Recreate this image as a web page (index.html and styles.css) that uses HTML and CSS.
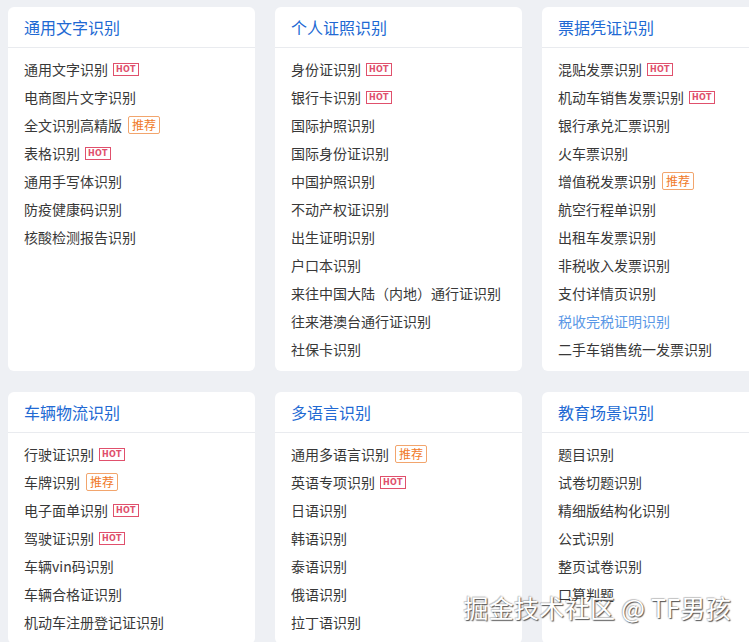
FILE: index.html
```html
<!DOCTYPE html>
<html lang="zh">
<head>
<meta charset="utf-8">
<link rel="stylesheet" href="styles.css">
</head>
<body>
<div class="grid">
  <section class="card">
    <h2 class="title">通用文字识别</h2>
    <ul class="list">
      <li>通用文字识别<span class="hot">HOT</span></li>
      <li>电商图片文字识别</li>
      <li>全文识别高精版<span class="rec">推荐</span></li>
      <li>表格识别<span class="hot">HOT</span></li>
      <li>通用手写体识别</li>
      <li>防疫健康码识别</li>
      <li>核酸检测报告识别</li>
    </ul>
  </section>
  <section class="card">
    <h2 class="title">个人证照识别</h2>
    <ul class="list">
      <li>身份证识别<span class="hot">HOT</span></li>
      <li>银行卡识别<span class="hot">HOT</span></li>
      <li>国际护照识别</li>
      <li>国际身份证识别</li>
      <li>中国护照识别</li>
      <li>不动产权证识别</li>
      <li>出生证明识别</li>
      <li>户口本识别</li>
      <li>来往中国大陆（内地）通行证识别</li>
      <li>往来港澳台通行证识别</li>
      <li>社保卡识别</li>
    </ul>
  </section>
  <section class="card">
    <h2 class="title">票据凭证识别</h2>
    <ul class="list">
      <li>混贴发票识别<span class="hot">HOT</span></li>
      <li>机动车销售发票识别<span class="hot">HOT</span></li>
      <li>银行承兑汇票识别</li>
      <li>火车票识别</li>
      <li>增值税发票识别<span class="rec">推荐</span></li>
      <li>航空行程单识别</li>
      <li>出租车发票识别</li>
      <li>非税收入发票识别</li>
      <li>支付详情页识别</li>
      <li class="active">税收完税证明识别</li>
      <li>二手车销售统一发票识别</li>
    </ul>
  </section>
  <section class="card">
    <h2 class="title">车辆物流识别</h2>
    <ul class="list">
      <li>行驶证识别<span class="hot">HOT</span></li>
      <li>车牌识别<span class="rec">推荐</span></li>
      <li>电子面单识别<span class="hot">HOT</span></li>
      <li>驾驶证识别<span class="hot">HOT</span></li>
      <li>车辆vin码识别</li>
      <li>车辆合格证识别</li>
      <li>机动车注册登记证识别</li>
    </ul>
  </section>
  <section class="card">
    <h2 class="title">多语言识别</h2>
    <ul class="list">
      <li>通用多语言识别<span class="rec">推荐</span></li>
      <li>英语专项识别<span class="hot">HOT</span></li>
      <li>日语识别</li>
      <li>韩语识别</li>
      <li>泰语识别</li>
      <li>俄语识别</li>
      <li>拉丁语识别</li>
    </ul>
  </section>
  <section class="card">
    <h2 class="title">教育场景识别</h2>
    <ul class="list">
      <li>题目识别</li>
      <li>试卷切题识别</li>
      <li>精细版结构化识别</li>
      <li>公式识别</li>
      <li>整页试卷识别</li>
      <li>口算判题</li>
    </ul>
  </section>
</div>
<div class="watermark">掘金技术社区 @ TF男孩</div>
</body>
</html>
```
FILE: styles.css
```css
html, body {
  margin: 0;
  padding: 0;
}
body {
  background: #eef0f4;
  font-family: "Noto Sans CJK SC", "Noto Sans", sans-serif;
  color: #333;
  width: 749px;
  height: 642px;
  overflow: hidden;
  position: relative;
}
.grid {
  display: grid;
  grid-template-columns: 247px 247px 247px;
  column-gap: 20px;
  row-gap: 21px;
  padding: 7px 0 0 8px;
  align-items: stretch;
}
.card {
  background: #fff;
  border-radius: 6px;
  padding-bottom: 8px;
}
.title {
  margin: 0;
  height: 40px;
  line-height: 40px;
  padding-left: 16px;
  font-size: 16px;
  font-weight: 400;
  color: #2169d3;
  border-bottom: 1px solid #e9ebef;
}
.list {
  list-style: none;
  margin: 0;
  padding: 7px 16px 0;
}
.list li {
  height: 28px;
  line-height: 28px;
  font-size: 14px;
  color: #383838;
  display: flex;
  align-items: center;
  white-space: nowrap;
}
.list li.active {
  color: #5a98e6;
}
.hot {
  display: inline-block;
  margin-left: 5px;
  height: 11px;
  line-height: 11px;
  padding: 0 2px;
  border: 1px solid #e0506c;
  color: #e0506c;
  font-family: "DejaVu Sans", sans-serif;
  font-size: 8px;
  font-weight: 700;
  letter-spacing: 0.3px;
  margin-top: 1px;
}
.rec {
  display: inline-block;
  margin-left: 6px;
  height: 16px;
  line-height: 16px;
  padding: 0 3px;
  border: 1px solid #f2a56d;
  border-radius: 2px;
  color: #f07a2a;
  font-size: 12px;
}
.watermark {
  position: absolute;
  right: 18px;
  bottom: 19px;
  font-size: 25px;
  line-height: 32px;
  color: #fff;
  letter-spacing: 0.3px;
  text-shadow: 1px 1px 1px #555, -1px -1px 0 rgba(0,0,0,0.15), 0 0 2px rgba(0,0,0,0.4);
}
```
